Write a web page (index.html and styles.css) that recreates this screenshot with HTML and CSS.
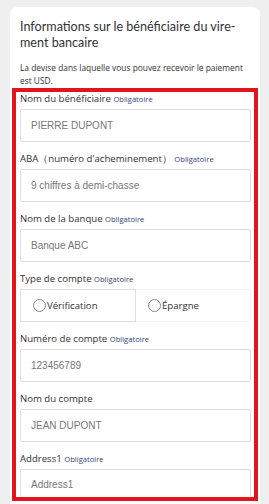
FILE: index.html
```html
<!DOCTYPE html>
<html lang="fr">
  <head>
    <meta charset="UTF-8" />
    <meta name="viewport" content="width=device-width, initial-scale=1.0" />
    <title>Bénéficiaire du virement</title>
    <link rel="stylesheet" href="styles.css">
  </head>
  <body>
    <div class="card">
      <h2 class="card-title">Informations sur le bénéficiaire du vire-<br>ment bancaire</h2>
      <p class="card-desc">La devise dans laquelle vous pouvez recevoir le paiement est USD.</p>

      <!-- Highlighted form area -->
      <div class="form-box">
        <div class="field">
          <label class="field-label">Nom du bénéficiaire <span class="req">Obligatoire</span></label>
          <div class="input">PIERRE DUPONT</div>
        </div>
        <div class="field">
          <label class="field-label">ABA（numéro d'acheminement） <span class="req">Obligatoire</span></label>
          <div class="input">9 chiffres à demi-chasse</div>
        </div>
        <div class="field">
          <label class="field-label">Nom de la banque <span class="req">Obligatoire</span></label>
          <div class="input">Banque ABC</div>
        </div>
        <div class="field">
          <label class="field-label">Type de compte <span class="req">Obligatoire</span></label>
          <div class="radio-group">
            <div class="radio-option selected-box"><span class="radio"></span>Vérification</div>
            <div class="radio-option"><span class="radio"></span>Épargne</div>
          </div>
        </div>
        <div class="field">
          <label class="field-label">Numéro de compte <span class="req">Obligatoire</span></label>
          <div class="input">123456789</div>
        </div>
        <div class="field">
          <label class="field-label">Nom du compte</label>
          <div class="input">JEAN DUPONT</div>
        </div>
        <div class="field">
          <label class="field-label">Address1 <span class="req">Obligatoire</span></label>
          <div class="input">Address1</div>
        </div>
      </div>
    </div>
  </body>
</html>
```

FILE: styles.css
```css
body {
  margin: 0;
  background-color: #efefef;
  font-family: "Open Sans", "Liberation Sans", sans-serif;
  color: #333;
  height: 504px;
  overflow: hidden;
}

/* White card */
.card {
  margin: 7px 9px 0 10px;
  padding: 10px 10px 20px 10px;
  background-color: #fff;
  border-radius: 7px;
}

.card-title {
  margin: 2px 0 0 0;
  font-family: "Lato", "Open Sans", sans-serif;
  font-size: 12.6px;
  font-weight: normal;
  line-height: 16px;
  color: #333;
}

.card-desc {
  margin: 10px 0 1px 0;
  font-size: 8.4px;
  line-height: 13px;
  color: #333;
}

/* Red highlight frame */
.form-box {
  margin: 0 -8px;
  padding: 0 3px 0 4px;
  border: 4px solid #e3141d;
}

.field {
  margin-bottom: 10px;
}

.field:last-child {
  margin-bottom: 0;
}

.field-label {
  display: block;
  margin-bottom: 3px;
  font-size: 9.6px;
  line-height: 14px;
  color: #333;
}

.req {
  font-size: 7.6px;
  color: #34437a;
}

.input {
  height: 31px;
  padding: 0 10px;
  border: 1px solid #dedede;
  border-radius: 2px;
  font-family: "Liberation Sans", Arial, sans-serif;
  font-size: 10px;
  line-height: 31px;
  color: #777;
}

.field:last-child .input {
  height: 27px;
  line-height: 29px;
  border-bottom: none;
}

/* Account type radios */
.radio-group {
  display: flex;
  height: 33px;
}

.radio-option {
  flex: 1;
  display: flex;
  align-items: center;
  padding-left: 12px;
  font-size: 9.6px;
  color: #333;
  border: 1px solid #f3f3f3;
  border-left: none;
}

.radio-option.selected-box {
  border: 1px solid #dedede;
}

.radio {
  width: 11px;
  height: 11px;
  margin-right: 1px;
  border: 1px solid #888;
  border-radius: 50%;
}
```
